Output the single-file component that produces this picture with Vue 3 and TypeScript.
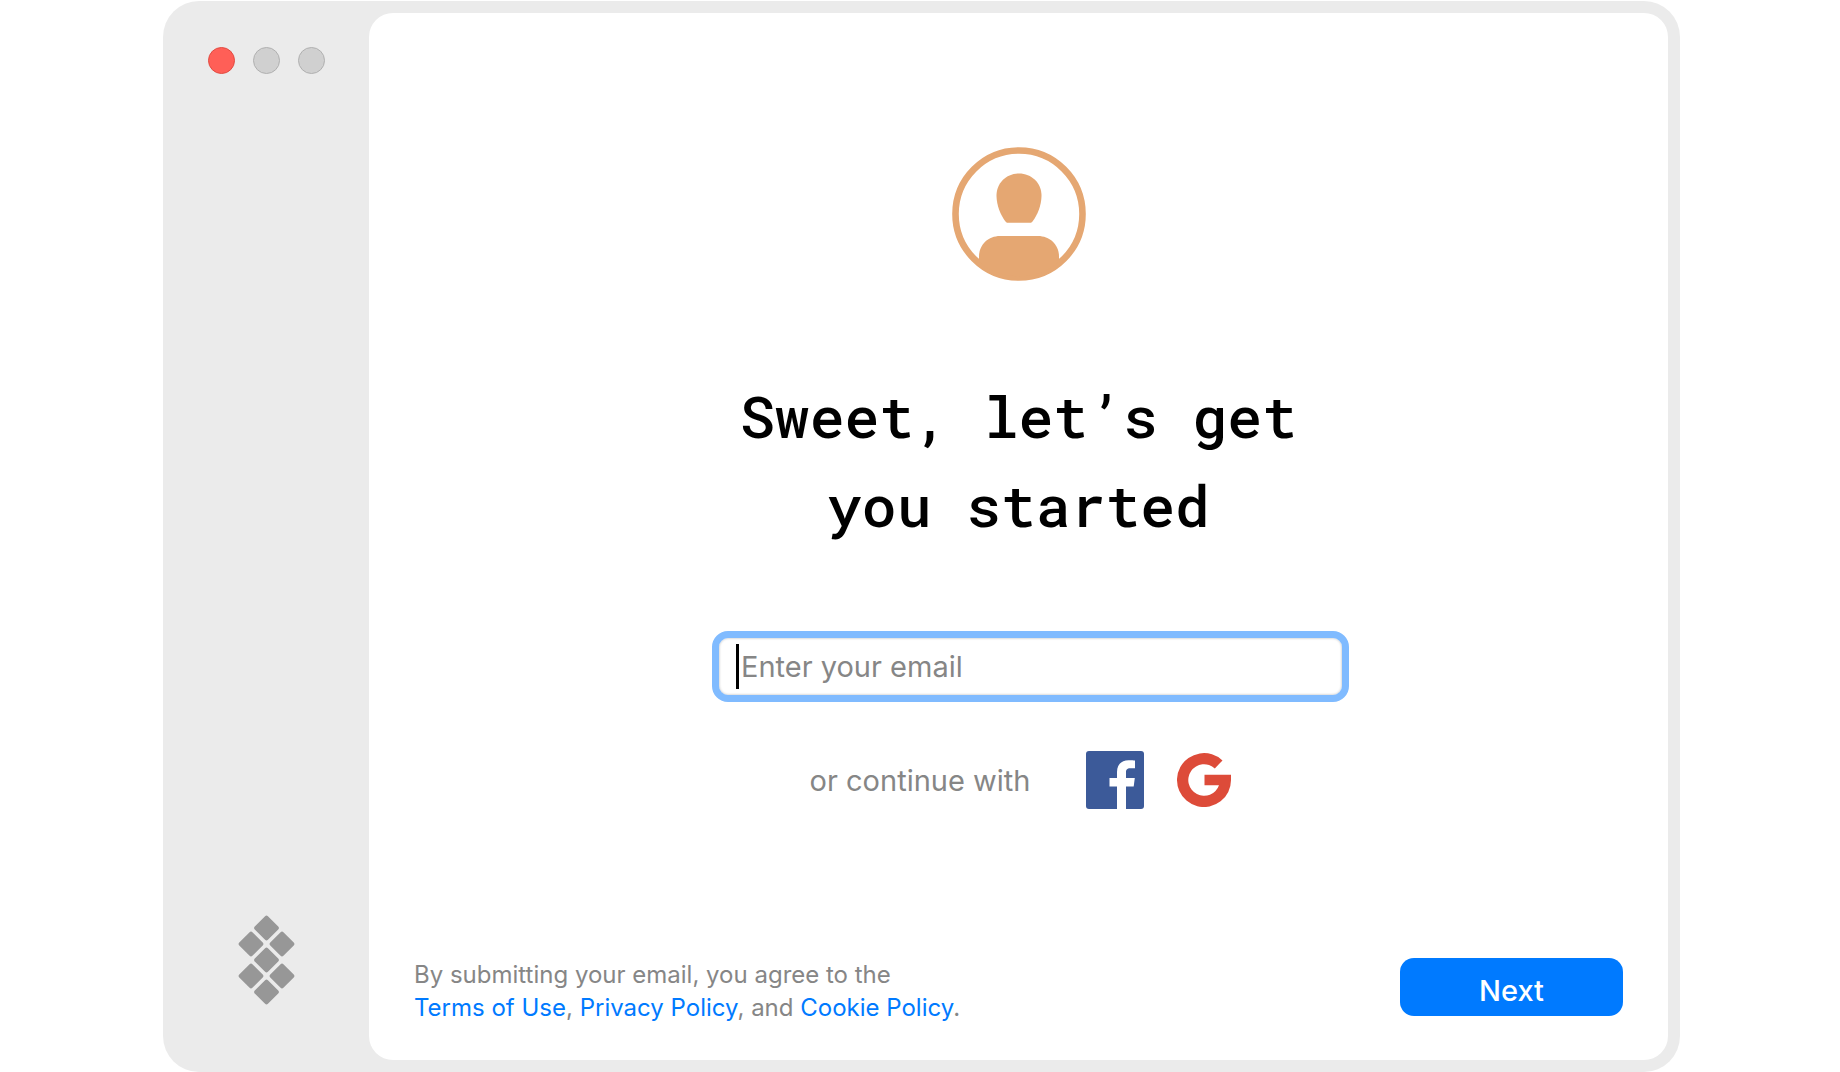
<script setup lang="ts">
import { ref } from 'vue'

const email = ref('')
const lights = ['close', 'minimize', 'zoom']
const tiles = [
  { x: 28.5, y: 13 },
  { x: 13, y: 29 },
  { x: 44, y: 29 },
  { x: 28.5, y: 45 },
  { x: 13, y: 61 },
  { x: 44, y: 61 },
  { x: 28.5, y: 77 },
]
</script>

<template>
  <div class="stage">
    <div class="window">
      <aside class="sidebar">
        <div class="lights">
          <button
            v-for="name in lights"
            :key="name"
            type="button"
            class="light"
            :class="name"
            :aria-label="name"
          ></button>
        </div>
        <svg class="brand" width="57" height="90" viewBox="0 0 57 90" aria-hidden="true">
          <rect
            v-for="(t, i) in tiles"
            :key="i"
            :x="t.x - 9.3"
            :y="t.y - 9.3"
            width="18.6"
            height="18.6"
            rx="2"
            :transform="`rotate(45 ${t.x} ${t.y})`"
            fill="#979797"
          />
        </svg>
      </aside>

      <main class="panel">
        <svg class="avatar" width="134" height="134" viewBox="0 0 134 134" aria-hidden="true">
          <circle cx="67" cy="67" r="63.5" fill="none" stroke="#e5a772" stroke-width="6.6" />
          <path
            d="M67 26.500c12.500 0 22.500 9.500 22.500 22 0 9.500-4 19.500-9 26-.7.900-1.300 1.200-2.300 1.200H55.800c-1 0-1.600-.3-2.300-1.200-5-6.500-9-16.500-9-26 0-12.500 10-22 22.500-22z"
            fill="#e5a772"
          />
          <path
            d="M27 115V109.500C27 97.500 36.500 89 48 89H86C97.500 89 107 97.500 107 109.500V115A62.500 62.500 0 0 1 27 115z"
            fill="#e5a772"
          />
        </svg>

        <h1 class="title">Sweet, let’s get<br />you started</h1>

        <form id="signup" class="field" @submit.prevent>
          <input
            v-model="email"
            class="email"
            type="email"
            placeholder="Enter your email"
            aria-label="Enter your email"
          />
          <span v-if="!email" class="caret"></span>
        </form>

        <div class="social">
          <span class="or">or continue with</span>
          <button type="button" class="provider" aria-label="Facebook">
            <svg width="58" height="58" viewBox="0 0 58 58">
              <rect width="58" height="58" rx="3" fill="#3c5a99" />
              <path
                d="M31 58V35.500H23.500V27H31V21C31 13.500 35.500 9.200 42.500 9.200C45.500 9.200 48 9.400 49 9.500V17.300H44.500C40.700 17.300 40 19 40 21.600V27H48.800L47.700 35.500H40V58Z"
                fill="#fff"
              />
            </svg>
          </button>
          <button type="button" class="provider google" aria-label="Google">
            <svg width="54" height="54" viewBox="0 0 54 54">
              <path
                d="M45.500 7.400A27 27 0 1 0 54 27V21.800H27.500V32.200H42A15.800 15.800 0 1 1 37.800 15.400Z"
                fill="#dd4b39"
              />
            </svg>
          </button>
        </div>

        <footer class="footer">
          <p class="legal">
            By submitting your email, you agree to the<br />
            <a href="#terms">Terms of Use</a>, <a href="#privacy">Privacy Policy</a>, and
            <a href="#cookies">Cookie Policy</a>.
          </p>
          <button class="next" type="submit" form="signup">Next</button>
        </footer>
      </main>
    </div>
  </div>
</template>

<style>
body {
  margin: 0;
  background: #fff;
}
</style>

<style scoped>
.stage {
  box-sizing: border-box;
  min-height: 100vh;
  padding: 1px 160px 0 163px;
  display: flex;
  font-family: Inter, 'Liberation Sans', sans-serif;
}
.window {
  flex: 1;
  box-sizing: border-box;
  display: flex;
  padding: 12px 12px 12px 0;
  border-radius: 36px;
  background: #ebebeb;
}
.sidebar {
  width: 206px;
  box-sizing: border-box;
  padding: 34px 0 55px 1px;
  display: flex;
  flex-direction: column;
  justify-content: space-between;
  align-items: center;
}
.lights {
  display: flex;
  gap: 18px;
}
.light {
  box-sizing: border-box;
  width: 27px;
  height: 27px;
  padding: 0;
  border: 1px solid #b0b0b0;
  border-radius: 50%;
  background: #d0d0d0;
}
.close {
  border-color: #e24b41;
  background: #ff5f57;
}
.brand,
.avatar,
.provider svg {
  display: block;
}
.panel {
  flex: 1;
  box-sizing: border-box;
  padding: 134px 45px 36px;
  display: flex;
  flex-direction: column;
  align-items: center;
  border-radius: 24px;
  background: #fff;
}
.title {
  margin: 90px 0 82px;
  font-family: 'Roboto Mono', 'Liberation Mono', monospace;
  font-size: 58px;
  line-height: 89px;
  font-weight: 500;
  text-align: center;
  color: #000;
}
.field {
  position: relative;
  width: 637px;
  margin-left: 24px;
}
.email {
  box-sizing: border-box;
  display: block;
  width: 100%;
  height: 71px;
  padding: 0 22px;
  border: 7px solid #80bbff;
  border-radius: 16px;
  outline: none;
  background: #fff;
  box-shadow: inset 0 0 2px 1px #dcdcdc;
  font-family: inherit;
  font-size: 29px;
  color: #000;
}
.email::placeholder {
  color: #868686;
  opacity: 1;
}
.caret {
  position: absolute;
  left: 24px;
  top: 13px;
  width: 3px;
  height: 45px;
  background: #000;
}
.social {
  display: flex;
  align-items: center;
  margin-top: 49px;
  margin-left: 4px;
}
.or {
  margin-right: 56px;
  font-size: 29px;
  color: #868686;
}
.provider {
  padding: 0;
  border: 0;
  background: none;
}
.google {
  margin-left: 33px;
}
.footer {
  align-self: stretch;
  display: flex;
  justify-content: space-between;
  align-items: flex-start;
  margin-top: auto;
}
.legal {
  margin: 0;
  font-size: 24px;
  line-height: 33px;
  color: #868686;
}
.legal a {
  color: #007aff;
  text-decoration: none;
}
.next {
  box-sizing: border-box;
  width: 223px;
  height: 58px;
  padding: 6px 0 0;
  border: 0;
  border-radius: 14px;
  background: #007aff;
  font-family: inherit;
  font-size: 29px;
  font-weight: 500;
  color: #fff;
}
</style>
